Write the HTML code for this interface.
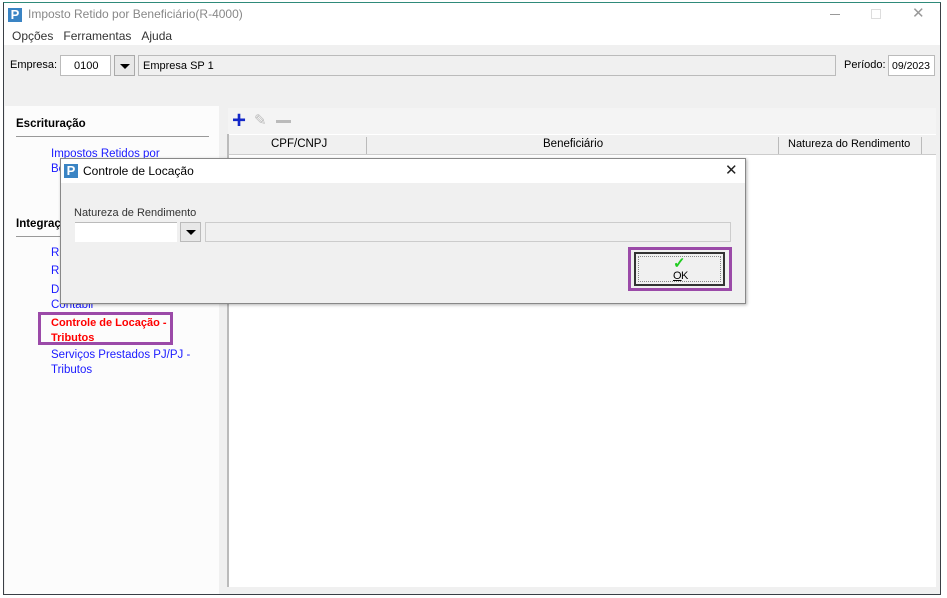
<!DOCTYPE html>
<html><head><meta charset="utf-8"><style>
*{box-sizing:border-box;margin:0;padding:0}
body{width:947px;height:598px;background:#fff;font-family:"Liberation Sans",sans-serif;font-size:11.5px;color:#000;position:relative;overflow:hidden}
.a{position:absolute}
.lnk{color:#1a1aff}
</style></head><body>
<div class="a" style="left:3px;top:2px;width:938px;height:593px;border:1px solid #3a3f45;border-top-color:#2f8a7a;background:#f0f0f0"></div>
<div class="a" style="left:4px;top:3px;width:936px;height:42px;background:#fff"></div>
<div class="a" style="left:8px;top:8px;width:14px;height:14px;background:#3a84c4;color:#fff;font-weight:bold;font-size:13px;line-height:14px;text-align:center">P</div>
<div class="a" style="left:28px;top:7px;font-size:12px;color:#888">Imposto Retido por Beneficiário(R-4000)</div>
<div class="a" style="left:830px;top:14px;width:10px;height:1px;background:#999"></div>
<div class="a" style="left:871px;top:9px;width:10px;height:10px;border:1px solid #ddd"></div>
<div class="a" style="left:912px;top:4px;font-size:15px;color:#999">✕</div>
<div class="a" style="left:12px;top:29px;font-size:12px;color:#333">Opções&nbsp;&nbsp;&nbsp;Ferramentas&nbsp;&nbsp;&nbsp;Ajuda</div>
<div class="a" style="left:10px;top:59px;font-size:11px">Empresa:</div>
<div class="a" style="left:60px;top:55px;width:51px;height:21px;background:#fff;border:1px solid #bbb;font-size:11px;padding:4px 0 0 13px">0100</div>
<div class="a" style="left:114px;top:55px;width:21px;height:21px;background:#e8e8e8;border:1px solid #aaa"></div>
<div class="a" style="left:120px;top:64px;border-left:5px solid transparent;border-right:5px solid transparent;border-top:5px solid #000"></div>
<div class="a" style="left:138px;top:55px;width:698px;height:21px;border:1px solid #bbb;font-size:11px;padding:4px 0 0 4px">Empresa SP 1</div>
<div class="a" style="left:844px;top:59px;font-size:11px">Período:</div>
<div class="a" style="left:888px;top:55px;width:47px;height:21px;background:#fff;border:1px solid #bbb;font-size:10.5px;padding:4px 0 0 3px">09/2023</div>
<div class="a" style="left:5px;top:106px;width:214px;height:488px;background:#fcfcfc"></div>
<div class="a" style="left:16px;top:118px;font-weight:bold">Escrituração</div>
<div class="a" style="left:16px;top:136px;width:193px;height:1px;background:#999"></div>
<div class="a lnk" style="left:51px;top:147px;line-height:15px">Impostos Retidos por<br>Be</div>
<div class="a" style="left:16px;top:218px;font-weight:bold">Integraç</div>
<div class="a" style="left:16px;top:236px;width:193px;height:1px;background:#999"></div>
<div class="a lnk" style="left:51px;top:247px">R</div>
<div class="a lnk" style="left:51px;top:265px">R</div>
<div class="a lnk" style="left:51px;top:283px;line-height:15px">D<br>Contabil</div>
<div class="a" style="left:38px;top:312px;width:135px;height:33px;border:3px solid #9b4aa8"></div>
<div class="a" style="left:51px;top:316px;color:#f00;font-weight:bold;line-height:15px;font-size:11px">Controle de Locação -<br>Tributos</div>
<div class="a lnk" style="left:51px;top:348px;line-height:15px">Serviços Prestados PJ/PJ -<br>Tributos</div>
<div class="a" style="left:228px;top:108px;width:708px;height:26px;background:#f4f4f4"></div>
<div class="a" style="left:232px;top:109px;color:#1428c8;font-size:24px;font-weight:bold;line-height:24px">+</div>
<div class="a" style="left:254px;top:111px;color:#bbb;font-size:15px">✎</div>
<div class="a" style="left:276px;top:120px;width:15px;height:3px;background:#bbb"></div>
<div class="a" style="left:227px;top:134px;width:709px;height:453px;background:#fff;border-left:2px solid #bbb"></div>
<div class="a" style="left:229px;top:135px;width:707px;height:20px;background:#f0f0f0;border-bottom:1px solid #ccc"></div>
<div class="a" style="left:271px;top:138px">CPF/CNPJ</div>
<div class="a" style="left:366px;top:137px;width:1px;height:17px;background:#bbb"></div>
<div class="a" style="left:543px;top:138px">Beneficiário</div>
<div class="a" style="left:778px;top:137px;width:1px;height:17px;background:#bbb"></div>
<div class="a" style="left:788px;top:138px;font-size:11px">Natureza do Rendimento</div>
<div class="a" style="left:921px;top:137px;width:1px;height:17px;background:#bbb"></div>
<div class="a" style="left:60px;top:158px;width:686px;height:146px;background:#f0f0f0;border:1px solid #888;box-shadow:1px 1px 3px rgba(0,0,0,.3)"></div>
<div class="a" style="left:61px;top:159px;width:684px;height:24px;background:#fff"></div>
<div class="a" style="left:64px;top:164px;width:14px;height:14px;background:#3a84c4;color:#fff;font-weight:bold;font-size:13px;line-height:14px;text-align:center">P</div>
<div class="a" style="left:83px;top:164px;font-size:12px">Controle de Locação</div>
<div class="a" style="left:725px;top:161px;font-size:15px;color:#222">✕</div>
<div class="a" style="left:74px;top:207px;font-size:11px;color:#333">Natureza de Rendimento</div>
<div class="a" style="left:75px;top:222px;width:102px;height:20px;background:#fff;border-top:1px solid #bbb"></div>
<div class="a" style="left:180px;top:222px;width:21px;height:20px;background:#e8e8e8;border:1px solid #bbb"></div>
<div class="a" style="left:186px;top:230px;border-left:5px solid transparent;border-right:5px solid transparent;border-top:5px solid #000"></div>
<div class="a" style="left:205px;top:222px;width:526px;height:20px;border:1px solid #ccc"></div>
<div class="a" style="left:628px;top:247px;width:104px;height:44px;border:3px solid #9b4aa8"></div>
<div class="a" style="left:634px;top:252px;width:91px;height:34px;background:#f0f0f0;border:2px solid #333;outline:1px dotted #888;outline-offset:-5px"></div>
<div class="a" style="left:673px;top:254px;color:#2c2;font-size:15px;font-weight:bold">✓</div>
<div class="a" style="left:673px;top:270px;font-size:11px;text-decoration:underline">O</div><div class="a" style="left:681px;top:270px;font-size:11px">K</div>
</body></html>
